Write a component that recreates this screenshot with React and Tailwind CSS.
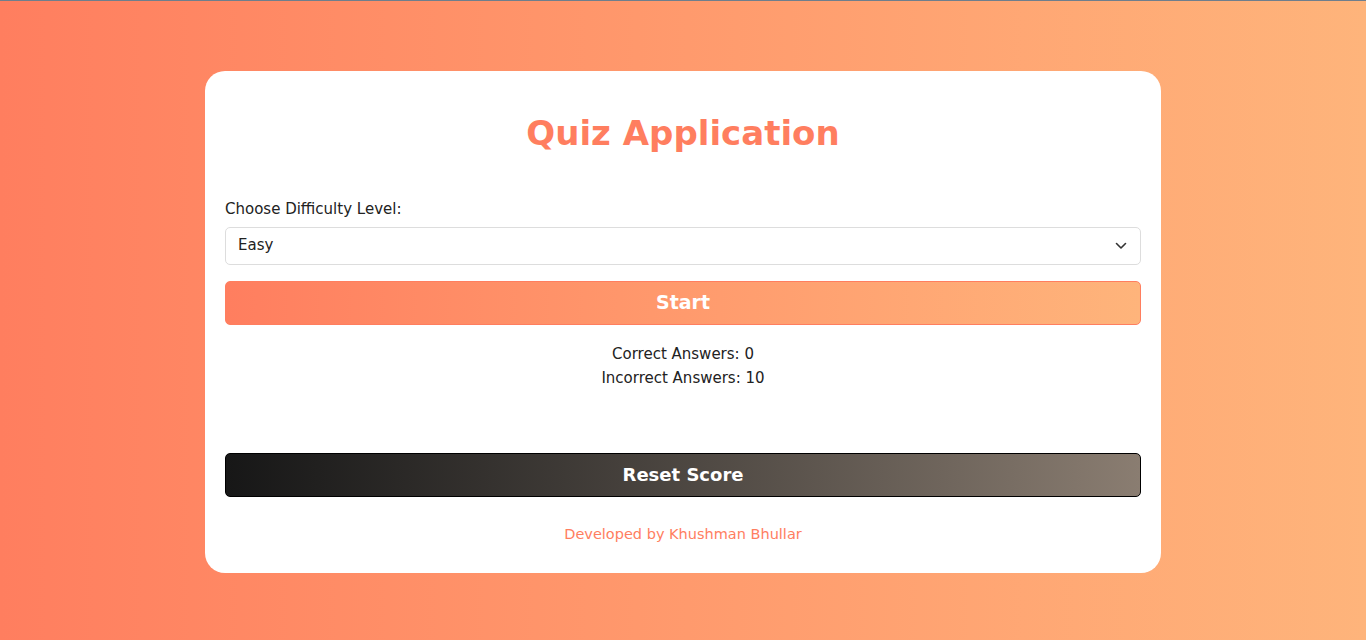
import React, { useState } from "react";

const App = () => {
  const [level, setLevel] = useState("easy");
  const correct = 0;
  const incorrect = 10;

  return (
    <div className="h-[640px] border-t border-[#6f7e8c] bg-gradient-to-r from-[#ff7e5f] to-[#feb47b] flex items-center justify-center font-['Comic_Sans_MS','DejaVu_Sans',sans-serif]">
      <div className="mt-[2px] w-[956px] h-[502px] bg-white rounded-[20px] px-5 pt-[38px] flex flex-col">
        <h1 className="text-center text-[#ff7e5f] text-[34px] font-bold leading-[48px] h-[48px]">Quiz Application</h1>

        <label className="mt-[42px] text-[15px] leading-5 text-[#222]">Choose Difficulty Level:</label>
        <div className="relative mt-2">
          <select
            value={level}
            onChange={(e) => setLevel(e.target.value)}
            className="w-full h-[38px] appearance-none border border-[#ddd] rounded-[5px] px-3 text-[15px] text-[#222] bg-white"
          >
            <option value="easy">Easy</option>
            <option value="medium">Medium</option>
            <option value="hard">Hard</option>
          </select>
          <svg className="absolute right-[14px] top-[15px] pointer-events-none" width="12" height="8" viewBox="0 0 12 8" fill="none">
            <path d="M1.5 1.5L6 6L10.5 1.5" stroke="#333" strokeWidth="1.6" strokeLinecap="round" strokeLinejoin="round" />
          </svg>
        </div>

        <button className="mt-4 h-[44px] w-full rounded-[5px] border border-[#ff7e5f] bg-gradient-to-r from-[#ff7e5f] to-[#feb47b] text-white text-[19px] font-bold">
          Start
        </button>

        <div className="mt-[17px] text-center text-[15px] leading-6 text-[#222]">
          <p>Correct Answers: {correct}</p>
          <p>Incorrect Answers: {incorrect}</p>
        </div>

        <button className="mt-[63px] h-[44px] w-full rounded-[5px] border border-black bg-gradient-to-r from-[#171717] to-[#8a7d71] text-white text-[18px] font-bold">
          Reset Score
        </button>

        <p className="mt-[27px] text-center text-[14.5px] text-[#ff7e5f]">Developed by Khushman Bhullar</p>
      </div>
    </div>
  );
};

export default App;
